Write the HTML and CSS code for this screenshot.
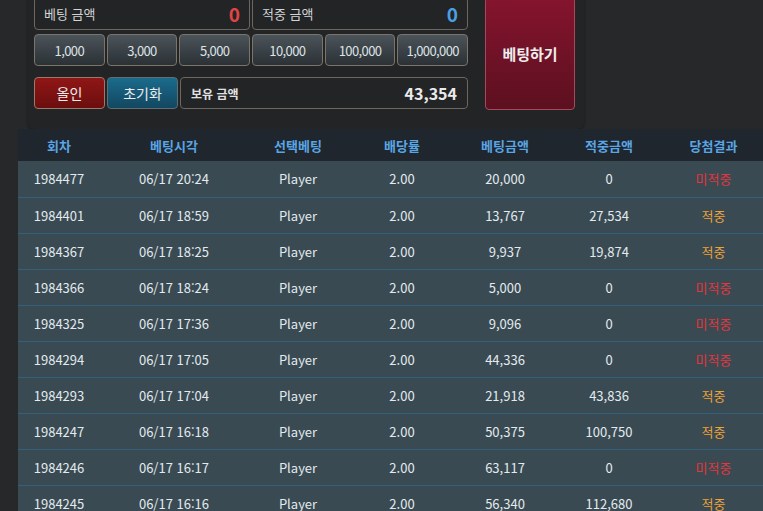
FILE: index.html
```html
<!DOCTYPE html>
<html lang="ko">
<head>
  <meta charset="UTF-8">
  <meta name="viewport" content="width=device-width, initial-scale=1.0">
  <title>베팅</title>
  <link rel="stylesheet" href="styles.css">
</head>
<body>
  <div class="page">
    <div class="bet-panel">
      <div class="bet-left">
        <div class="row amounts">
          <div class="field">
            <span class="label">베팅 금액</span>
            <span class="value red">0</span>
          </div>
          <div class="field">
            <span class="label">적중 금액</span>
            <span class="value blue">0</span>
          </div>
        </div>
        <div class="row chips">
          <button class="chip">1,000</button>
          <button class="chip">3,000</button>
          <button class="chip">5,000</button>
          <button class="chip">10,000</button>
          <button class="chip">100,000</button>
          <button class="chip">1,000,000</button>
        </div>
        <div class="row actions">
          <button class="act allin">올인</button>
          <button class="act reset">초기화</button>
          <div class="field balance">
            <span class="label">보유 금액</span>
            <span class="value">43,354</span>
          </div>
        </div>
      </div>
      <button class="bet-btn">베팅하기</button>
    </div>

    <table class="history">
      <colgroup>
        <col style="width: 82px">
        <col style="width: 148px">
        <col style="width: 100px">
        <col style="width: 108px">
        <col style="width: 98px">
        <col style="width: 110px">
        <col style="width: 99px">
      </colgroup>
      <thead>
        <tr>
          <th>회차</th>
          <th>베팅시각</th>
          <th>선택베팅</th>
          <th>배당률</th>
          <th>베팅금액</th>
          <th>적중금액</th>
          <th>당첨결과</th>
        </tr>
      </thead>
      <tbody>
        <tr><td>1984477</td><td>06/17 20:24</td><td>Player</td><td>2.00</td><td>20,000</td><td>0</td><td class="lose">미적중</td></tr>
        <tr><td>1984401</td><td>06/17 18:59</td><td>Player</td><td>2.00</td><td>13,767</td><td>27,534</td><td class="win">적중</td></tr>
        <tr><td>1984367</td><td>06/17 18:25</td><td>Player</td><td>2.00</td><td>9,937</td><td>19,874</td><td class="win">적중</td></tr>
        <tr><td>1984366</td><td>06/17 18:24</td><td>Player</td><td>2.00</td><td>5,000</td><td>0</td><td class="lose">미적중</td></tr>
        <tr><td>1984325</td><td>06/17 17:36</td><td>Player</td><td>2.00</td><td>9,096</td><td>0</td><td class="lose">미적중</td></tr>
        <tr><td>1984294</td><td>06/17 17:05</td><td>Player</td><td>2.00</td><td>44,336</td><td>0</td><td class="lose">미적중</td></tr>
        <tr><td>1984293</td><td>06/17 17:04</td><td>Player</td><td>2.00</td><td>21,918</td><td>43,836</td><td class="win">적중</td></tr>
        <tr><td>1984247</td><td>06/17 16:18</td><td>Player</td><td>2.00</td><td>50,375</td><td>100,750</td><td class="win">적중</td></tr>
        <tr><td>1984246</td><td>06/17 16:17</td><td>Player</td><td>2.00</td><td>63,117</td><td>0</td><td class="lose">미적중</td></tr>
        <tr><td>1984245</td><td>06/17 16:16</td><td>Player</td><td>2.00</td><td>56,340</td><td>112,680</td><td class="win">적중</td></tr>
      </tbody>
    </table>
  </div>
</body>
</html>
```

FILE: styles.css
```css
* {
  margin: 0;
  padding: 0;
  box-sizing: border-box;
  font-family: "Noto Sans CJK KR", "Noto Sans", sans-serif;
}

body {
  background: #272829;
  overflow: hidden;
  height: 511px;
}

.page {
  padding-left: 18px;
  margin-top: -10px;
}

.bet-panel {
  display: flex;
  gap: 17px;
  width: 556px;
  margin-left: 10px;
  padding: 7px 9px 19px 6px;
  background: #222425;
  border-radius: 0 0 6px 6px;
  box-shadow: 0 1px 3px rgba(0, 0, 0, 0.4);
}

.bet-left {
  display: flex;
  flex-direction: column;
  width: 434px;
}

.row {
  display: flex;
  gap: 2px;
}

.amounts {
  height: 33px;
}

.chips {
  margin-top: 4px;
  height: 32px;
}

.actions {
  margin-top: 11px;
  height: 32px;
}

.field {
  flex: 1;
  display: flex;
  justify-content: space-between;
  align-items: center;
  padding: 0 9px;
  border: 1px solid #6c675f;
  border-radius: 4px;
  background: #222425;
}

.label {
  font-size: 13px;
  color: #d2d4d6;
}

.value {
  font-size: 19px;
  font-weight: bold;
  color: #ebebeb;
}

.value.red { color: #e24444; }
.value.blue { color: #4b9fe2; }

.chip, .act {
  flex: 1;
  border: 1px solid #7b7468;
  border-radius: 4px;
  color: #dde2e5;
  font-size: 13px;
  letter-spacing: -0.6px;
  cursor: pointer;
}

.chip {
  background: linear-gradient(to bottom, #4b545a, #2b3135);
}

.act {
  flex: 0 0 71px;
  font-size: 14px;
  letter-spacing: 0;
  color: #eeeeee;
}

.allin {
  background: linear-gradient(to bottom, #901616, #6c0e0e);
  border-color: #9a7a68;
}

.reset {
  background: linear-gradient(to bottom, #1b6b8c, #124760);
  border-color: #5d6e74;
}

.balance {
  padding: 0 10px 0 10px;
}

.balance .label {
  font-size: 12px;
  font-weight: bold;
  color: #e2e2e2;
}

.balance .value {
  font-size: 16px;
}

.bet-btn {
  width: 90px;
  height: 113px;
  background: linear-gradient(to bottom, #85142e, #5c1020);
  border: 1px solid #a8485a;
  border-radius: 4px;
  color: #eeeeee;
  font-size: 15px;
  font-weight: bold;
  cursor: pointer;
}

.history {
  width: 745px;
  border-collapse: collapse;
  table-layout: fixed;
  text-align: center;
}

.history th {
  height: 32px;
  background: #1f262d;
  color: #5aa5e4;
  font-size: 13px;
  font-weight: bold;
}

.history td {
  height: 36px;
  background: #394a53;
  color: #e4eaee;
  font-size: 13px;
  border-top: 1px solid #33617c;
}

.history tbody tr:first-child td {
  border-top: none;
}

.history td.lose { color: #e3363d; }
.history td.win { color: #efa136; }
```
